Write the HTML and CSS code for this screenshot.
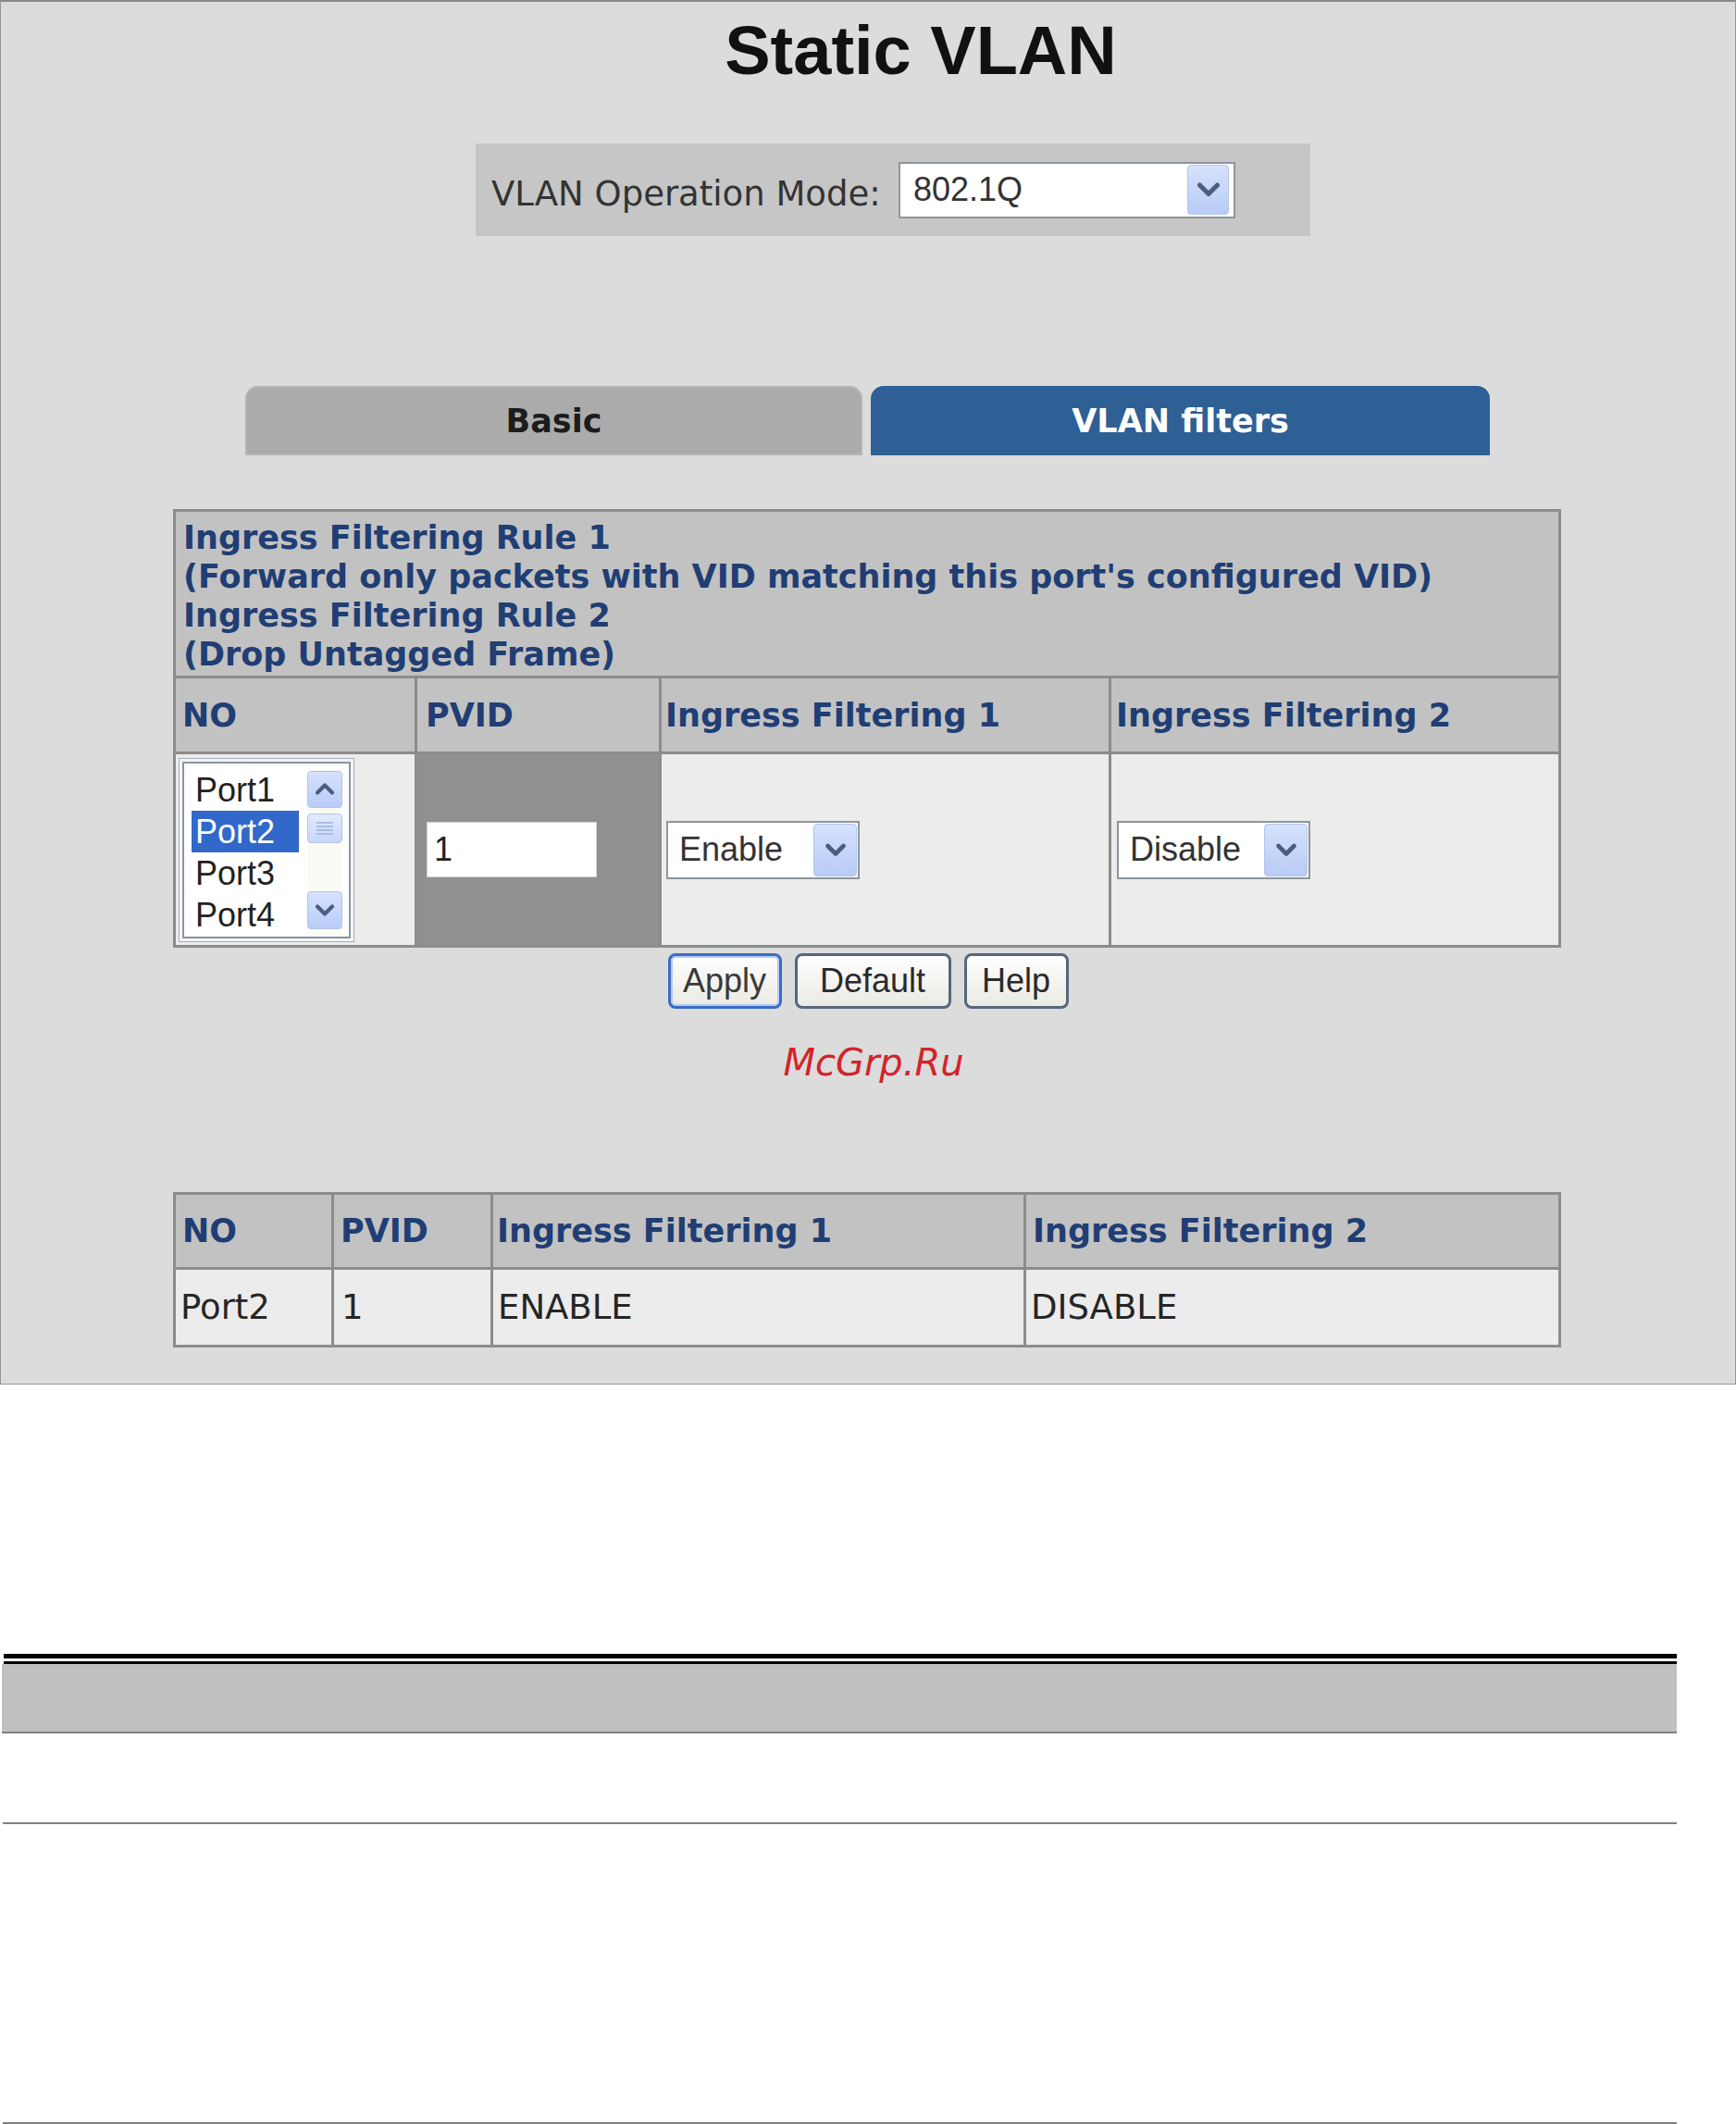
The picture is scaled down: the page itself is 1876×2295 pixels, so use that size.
FILE: index.html
```html
<!DOCTYPE html>
<html lang="en">
<head>
<meta charset="utf-8">
<title>Static VLAN</title>
<link rel="stylesheet" href="styles.css">
</head>
<body>
<div class="panel">
  <h1 class="title">Static VLAN</h1>

  <div class="mode">
    <span class="mode-label">VLAN Operation Mode:</span>
    <div class="select select-mode">
      <span class="select-value">802.1Q</span>
      <span class="select-arrow"><svg class="chev" width="26" height="18" viewBox="0 0 26 18"><path d="M3.5 4 L13 13.5 L22.5 4" fill="none" stroke="#4a5d80" stroke-width="5" stroke-linecap="round" stroke-linejoin="round"/></svg></span>
    </div>
  </div>

  <div class="tabs">
    <div class="tab tab-basic">Basic</div>
    <div class="tab tab-active">VLAN filters</div>
  </div>

  <table class="grid grid-config">
    <colgroup><col class="cc1"><col class="cc2"><col class="cc3"><col class="cc4"></colgroup>
    <tr>
      <td colspan="4" class="hd"><div class="desc">Ingress Filtering Rule 1<br>(Forward only packets with VID matching this port's configured VID)<br>Ingress Filtering Rule 2<br>(Drop Untagged Frame)</div></td>
    </tr>
    <tr>
      <th class="hd"><div class="head head-no">NO</div></th>
      <th class="hd"><div class="head head-pvid">PVID</div></th>
      <th class="hd"><div class="head head-if1">Ingress Filtering 1</div></th>
      <th class="hd"><div class="head head-if2">Ingress Filtering 2</div></th>
    </tr>
    <tr>
      <td class="dt"><div class="data-box box-no">
        <div class="listbox"><div class="listbox-inner">
          <div class="options">
            <div class="option">Port1</div>
            <div class="option selected">Port2</div>
            <div class="option">Port3</div>
            <div class="option">Port4</div>
          </div>
          <div class="scrollbar">
            <div class="sb-btn sb-up"><svg width="22" height="15" viewBox="0 0 22 15"><path d="M3 11.5 L11 3.5 L19 11.5" fill="none" stroke="#4a5d80" stroke-width="4.2" stroke-linecap="round" stroke-linejoin="round"/></svg></div>
            <div class="sb-thumb"><svg width="24" height="18" viewBox="0 0 24 18"><path d="M3 3 H21 M3 7 H21 M3 11 H21 M3 15 H21" stroke="#9bb0dc" stroke-width="1.6"/></svg></div>
            <div class="sb-space"></div>
            <div class="sb-btn sb-down"><svg width="22" height="15" viewBox="0 0 22 15"><path d="M3 3.5 L11 11.5 L19 3.5" fill="none" stroke="#4a5d80" stroke-width="4.2" stroke-linecap="round" stroke-linejoin="round"/></svg></div>
          </div>
        </div></div>
      </div></td>
      <td class="dt pvid-cell"><div class="data-box box-pvid">
        <div class="pvid-input">1</div>
      </div></td>
      <td class="dt"><div class="data-box box-if1">
        <div class="select select-small">
          <span class="select-value">Enable</span>
          <span class="select-arrow"><svg width="24" height="17" viewBox="0 0 24 17"><path d="M3.5 4 L12 12.5 L20.5 4" fill="none" stroke="#4a5d80" stroke-width="4.6" stroke-linecap="round" stroke-linejoin="round"/></svg></span>
        </div>
      </div></td>
      <td class="dt"><div class="data-box box-if2">
        <div class="select select-small">
          <span class="select-value">Disable</span>
          <span class="select-arrow"><svg width="24" height="17" viewBox="0 0 24 17"><path d="M3.5 4 L12 12.5 L20.5 4" fill="none" stroke="#4a5d80" stroke-width="4.6" stroke-linecap="round" stroke-linejoin="round"/></svg></span>
        </div>
      </div></td>
    </tr>
  </table>

  <div class="buttons">
    <button class="btn btn-apply" type="button">Apply</button>
    <button class="btn btn-default" type="button">Default</button>
    <button class="btn btn-help" type="button">Help</button>
  </div>

  <div class="watermark">McGrp.Ru</div>

  <table class="grid grid-summary">
    <colgroup><col class="cs1"><col class="cs2"><col class="cs3"><col class="cs4"></colgroup>
    <tr>
      <th class="hd"><div class="shead">NO</div></th>
      <th class="hd"><div class="shead">PVID</div></th>
      <th class="hd"><div class="shead shead-if1">Ingress Filtering 1</div></th>
      <th class="hd"><div class="shead">Ingress Filtering 2</div></th>
    </tr>
    <tr>
      <td class="dt"><div class="sdata">Port2</div></td>
      <td class="dt"><div class="sdata sdata-pvid">1</div></td>
      <td class="dt"><div class="sdata">ENABLE</div></td>
      <td class="dt"><div class="sdata">DISABLE</div></td>
    </tr>
  </table>
</div>

<div class="doc">
  <div class="rule-thick"></div>
  <div class="rule-gap"></div>
  <div class="rule-thin"></div>
  <div class="doc-band"></div>
  <div class="doc-row"></div>
  <div class="doc-tail"></div>
</div>
</body>
</html>
```

FILE: styles.css
```css
html, body {
  margin: 0;
  padding: 0;
  background: #ffffff;
}

body {
  font-family: "DejaVu Sans", Verdana, sans-serif;
}

.panel {
  width: 1876px;
  height: 1496px;
  box-sizing: border-box;
  background: #dcdcdc;
  border: 1px solid #959595;
  border-top: 2px solid #8a8a8a;
  overflow: hidden;
}

.title {
  margin: 0;
  padding: 16px 0 0 114px;
  font-family: "Liberation Sans", Arial, sans-serif;
  font-weight: bold;
  font-size: 74px;
  line-height: 74px;
  text-align: center;
  color: #111111;
}

/* Operation mode bar */
.mode {
  margin: 63px 0 0 513px;
  width: 902px;
  height: 100px;
  box-sizing: border-box;
  padding-left: 17px;
  background: #c6c6c6;
  display: flex;
  align-items: center;
}

.mode-label {
  width: 440px;
  padding-top: 9px;
  font-family: "DejaVu Sans", Verdana, sans-serif;
  font-size: 37px;
  color: #333333;
  white-space: nowrap;
}

.select {
  display: flex;
  align-items: center;
  box-sizing: border-box;
  background: #ffffff;
  border: 2px solid #8e959c;
  font-family: "Liberation Sans", Arial, sans-serif;
  font-size: 36px;
  color: #333333;
}

.select-value {
  flex: 1;
  padding-left: 14px;
  white-space: nowrap;
}

.select-arrow {
  display: flex;
  align-items: center;
  justify-content: center;
  box-sizing: border-box;
  border-radius: 4px;
  border: 1px solid #b3c4ec;
  background: linear-gradient(#d6e2fd, #b8cbf6);
}

.select-mode {
  width: 364px;
  height: 61px;
}

.select-mode .select-arrow {
  width: 45px;
  height: 54px;
  margin-right: 5px;
}

.select-small {
  width: 209px;
  height: 63px;
}

.select-small .select-value {
  padding-left: 12px;
}

.select-small .select-arrow {
  width: 47px;
  height: 57px;
  margin-right: 1px;
}

/* Tabs */
.tabs {
  display: flex;
  gap: 9px;
  margin: 162px 0 0 264px;
}

.tab {
  height: 75px;
  border-radius: 14px 14px 0 0;
  display: flex;
  align-items: center;
  justify-content: center;
  font-family: "DejaVu Sans", Verdana, sans-serif;
  font-weight: bold;
  font-size: 35px;
}

.tab-basic {
  width: 667px;
  background: #ababab;
  color: #1c1c1c;
  box-shadow: inset 0 0 0 2px #b5b5b5;
}

.tab-active {
  width: 669px;
  background: #2e5f95;
  color: #ffffff;
}

/* Tables */
.grid {
  border-collapse: separate;
  border-spacing: 0;
  table-layout: fixed;
  width: 1500px;
  border: 3px solid #8c8c8c;
  margin-left: 186px;
}

.grid td,
.grid th {
  padding: 0;
  border-right: 3px solid #8c8c8c;
  border-bottom: 3px solid #8c8c8c;
  text-align: left;
  font-weight: normal;
  vertical-align: middle;
}

.grid tr > :last-child {
  border-right: 0;
}

.grid tr:last-child > * {
  border-bottom: 0;
}

.grid .hd {
  background: #c2c2c2;
}

.grid .dt {
  background: #ececec;
}

.grid .pvid-cell {
  background: #909090;
}

.grid-config {
  margin-top: 58px;
}

.cc1 { width: 261px; }
.cc2 { width: 264px; }
.cc3 { width: 486px; }
.cc4 { width: 483px; }

.desc {
  height: 177px;
  box-sizing: border-box;
  padding: 7px 8px 2px 8px;
  font-family: "DejaVu Sans", Verdana, sans-serif;
  font-weight: bold;
  font-size: 35px;
  line-height: 42px;
  color: #203e74;
  white-space: nowrap;
}

.head {
  height: 79px;
  display: flex;
  align-items: center;
  padding-left: 7px;
  font-family: "DejaVu Sans", Verdana, sans-serif;
  font-weight: bold;
  font-size: 35px;
  color: #203e74;
  white-space: nowrap;
}

.head-pvid { padding-left: 9px; }
.head-if1 { padding-left: 4px; }
.head-if2 { padding-left: 5px; }

.data-box {
  height: 206px;
  display: flex;
  align-items: center;
}

.box-no { padding-left: 3px; }
.box-pvid { padding-left: 10px; }
.box-if1 { padding-left: 5px; }
.box-if2 { padding-left: 6px; }

/* List box */
.listbox {
  width: 190px;
  height: 199px;
  box-sizing: border-box;
  border: 1px solid #a7aeb8;
  padding: 3px;
  background: #f3f5f8;
}

.listbox-inner {
  height: 100%;
  box-sizing: border-box;
  border: 2px solid #8b95a1;
  background: #ffffff;
  display: flex;
  gap: 9px;
  padding: 6px 6px 1px 8px;
}

.options {
  width: 116px;
}

.option {
  height: 45px;
  line-height: 45px;
  padding-left: 4px;
  font-family: "Liberation Sans", Arial, sans-serif;
  font-size: 36px;
  color: #222222;
}

.option.selected {
  background: #3168c9;
  color: #ffffff;
}

.scrollbar {
  width: 38px;
  display: flex;
  flex-direction: column;
  background: #fbfbf6;
}

.sb-btn,
.sb-thumb {
  display: flex;
  align-items: center;
  justify-content: center;
  box-sizing: border-box;
  border-radius: 4px;
  border: 1px solid #b1c2ea;
  background: linear-gradient(#d6e2fd, #b9ccf7);
}

.sb-up {
  height: 40px;
  margin-top: 2px;
}

.sb-thumb {
  height: 32px;
  margin-top: 6px;
  background: linear-gradient(#e2eafd, #c8d7fa);
}

.sb-space {
  flex: 1;
}

.sb-down {
  height: 41px;
  margin-bottom: 7px;
}

.pvid-input {
  width: 184px;
  height: 60px;
  box-sizing: border-box;
  background: #ffffff;
  border: 1px solid #d2d2d2;
  padding-left: 7px;
  display: flex;
  align-items: center;
  font-family: "Liberation Sans", Arial, sans-serif;
  font-size: 36px;
  color: #222222;
}

/* Buttons */
.buttons {
  display: flex;
  justify-content: center;
  gap: 14px;
  margin-top: 6px;
}

.btn {
  height: 60px;
  box-sizing: border-box;
  padding: 0;
  margin: 0;
  border: 3px solid #56677a;
  border-radius: 8px;
  background: linear-gradient(#fefefe, #ebeae3);
  font-family: "Liberation Sans", Arial, sans-serif;
  font-size: 36px;
  color: #2a2a2a;
  display: flex;
  align-items: center;
  justify-content: center;
}

.btn-apply {
  width: 123px;
  border-color: #3b6cc4;
  box-shadow: inset 0 0 0 2px #b3cbf3;
  color: #3a3a3a;
}

.btn-default { width: 169px; }
.btn-help { width: 113px; }

.watermark {
  margin-top: 33px;
  height: 50px;
  line-height: 50px;
  padding-left: 12px;
  text-align: center;
  font-family: "DejaVu Sans", Verdana, sans-serif;
  font-style: italic;
  font-size: 40px;
  color: #d2232a;
}

/* Summary table */
.grid-summary {
  margin-top: 115px;
}

.cs1 { width: 171px; }
.cs2 { width: 172px; }
.cs3 { width: 576px; }
.cs4 { width: 575px; }

.shead {
  height: 78px;
  display: flex;
  align-items: center;
  padding-left: 7px;
  font-family: "DejaVu Sans", Verdana, sans-serif;
  font-weight: bold;
  font-size: 35px;
  color: #203e74;
  white-space: nowrap;
}

.shead-if1 { padding-left: 4px; }

.sdata {
  height: 81px;
  display: flex;
  align-items: center;
  padding-left: 5px;
  font-family: "DejaVu Sans", Verdana, sans-serif;
  font-size: 37px;
  color: #262626;
  white-space: nowrap;
}

.sdata-pvid { padding-left: 8px; }

/* Document rules below the screenshot */
.doc {
  margin: 291px 0 0 3px;
  width: 1809px;
}

.rule-thick {
  height: 5px;
  margin-left: 1px;
  background: #000000;
}

.rule-gap {
  height: 3px;
}

.rule-thin {
  height: 3px;
  margin-left: 1px;
  background: #000000;
}

.doc-band {
  height: 73px;
  margin-left: -1px;
  background: #c0c0c0;
  border-bottom: 2px solid #808080;
}

.doc-row {
  height: 96px;
  border-bottom: 2px solid #808080;
}

.doc-tail {
  height: 322px;
  border-bottom: 2px solid #808080;
}
```
